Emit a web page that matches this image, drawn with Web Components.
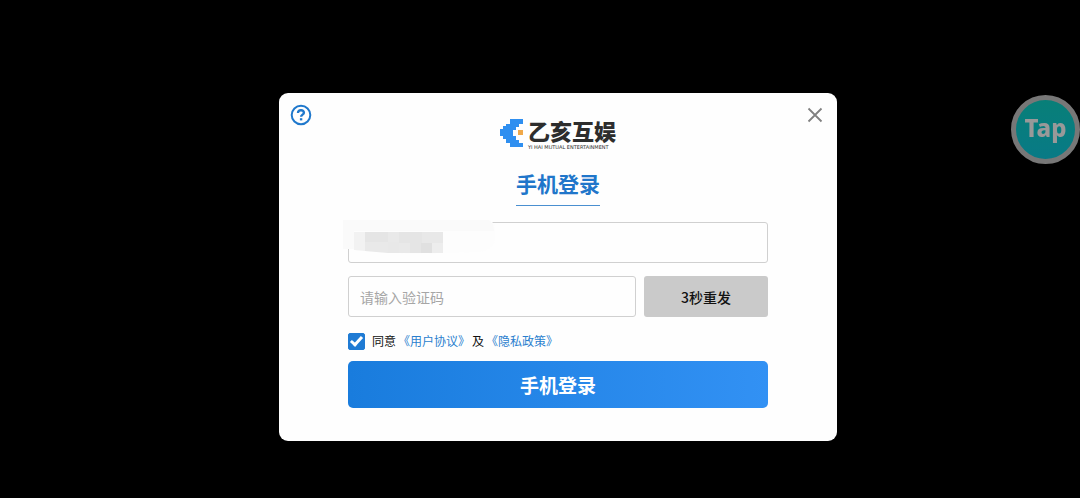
<!DOCTYPE html>
<html lang="zh-CN">
<head>
<meta charset="utf-8">
<meta name="viewport" content="width=device-width, initial-scale=1">
<title>手机登录</title>
<style>
  body {
    margin: 0;
    background: #000;
    color: #111;
    font-family: "Noto Sans CJK SC", "Noto Sans", sans-serif;
  }
</style>
</head>
<body>
<login-screen>
  <login-card heading="手机登录">
    <brand-logo slot="brand" name="乙亥互娱" tagline="YI HAI MUTUAL ENTERTAINMENT"></brand-logo>
    <text-field label="手机号" type="tel"><masked-value></masked-value></text-field>
    <code-row>
      <text-field label="验证码" type="text" placeholder="请输入验证码"></text-field>
      <action-button slot="action" variant="muted">3秒重发</action-button>
    </code-row>
    <consent-check>同意<policy-link>《用户协议》</policy-link>及<policy-link>《隐私政策》</policy-link></consent-check>
    <action-button variant="primary">手机登录</action-button>
  </login-card>
  <float-badge slot="badge">Tap</float-badge>
</login-screen>

<script>
// Full window, the card sits centred inside the safe area
class LoginScreen extends HTMLElement {
  constructor() {
    super();
    this.attachShadow({ mode: 'open' });
    this.shadowRoot.innerHTML = `
      <style>
        :host {
          display: flex;
          box-sizing: border-box;
          min-height: 100vh;
          padding: 36px 0 0 36px;
          align-items: center;
          justify-content: center;
        }
        ::slotted([slot="badge"]) {
          position: fixed;
          top: 95px;
          right: 0;
        }
      </style>
      <slot></slot>
      <slot name="badge"></slot>
    `;
  }
}

class LoginCard extends HTMLElement {
  connectedCallback() {
    this.attachShadow({ mode: 'open' });
    this.shadowRoot.innerHTML = `
      <style>
        :host {
          display: block;
          box-sizing: border-box;
          width: 100%;
          max-width: 558px;
          background: #fefefe;
          border-radius: 9px;
        }
        header {
          display: grid;
          grid-template-columns: 1fr auto 1fr;
          align-items: start;
          padding: 11px 11px 0;
        }
        button {
          display: block;
          width: 22px;
          height: 22px;
          padding: 0;
          border: 0;
          background: none;
          cursor: pointer;
        }
        button svg { display: block; }
        .close { justify-self: end; }
        .brand { padding-top: 13px; }
        main {
          display: flex;
          flex-direction: column;
          padding: 0 69px 33px;
        }
        h1 {
          align-self: center;
          margin: 17px 0 16px;
          padding-bottom: 6px;
          border-bottom: 1px solid #4a8fd0;
          color: #2076ca;
          font-size: 21px;
          line-height: 32px;
          font-weight: 700;
        }
        .fields {
          display: flex;
          flex-direction: column;
          gap: 13px;
        }
      </style>
      <header>
        <button type="button" aria-label="帮助">
          <svg width="22" height="22" viewBox="0 0 22 22" fill="none" stroke="#1f78cc" stroke-width="2">
            <circle cx="11" cy="11" r="9.3"/>
            <path stroke-width="2.4" d="M8 9.1c0-1.8 1.2-2.9 3-2.9s2.9 1 2.9 2.5c0 2-2.8 1.9-2.8 4.1"/>
            <path stroke-width="2.4" d="M11.1 14.2v2.2"/>
          </svg>
        </button>
        <div class="brand"><slot name="brand"></slot></div>
        <button type="button" class="close" aria-label="关闭">
          <svg width="22" height="22" viewBox="0 0 22 22" stroke="#808080" stroke-width="1.8">
            <path d="M4.5 4.5l13 13M17.5 4.5l-13 13"/>
          </svg>
        </button>
      </header>
      <main>
        <h1>${this.getAttribute('heading')}</h1>
        <div class="fields"><slot></slot></div>
      </main>
    `;
  }
}

class BrandLogo extends HTMLElement {
  connectedCallback() {
    this.attachShadow({ mode: 'open' });
    this.shadowRoot.innerHTML = `
      <style>
        :host {
          display: flex;
          align-items: flex-start;
          gap: 4px;
          color: #2d2d2d;
        }
        svg { display: block; }
        .name {
          font-size: 22px;
          line-height: 27px;
          font-weight: 900;
        }
        .tagline {
          font: 5px/6px "DejaVu Sans", sans-serif;
          white-space: nowrap;
        }
      </style>
      <svg width="24" height="32" viewBox="0 0 24 32">
        <path fill="#2f8ff0" d="M10 2h13v5h-4v3h-3v3h-3v6h3v4h3v3h4v4H10v-4H6v-4H3v-3H0v-7h3v-3h3V7h4z"/>
        <path fill="#f0a848" d="M18 13h5v5h-5z"/>
      </svg>
      <div>
        <div class="name">${this.getAttribute('name')}</div>
        <div class="tagline">${this.getAttribute('tagline')}</div>
      </div>
    `;
  }
}

class TextField extends HTMLElement {
  connectedCallback() {
    this.attachShadow({ mode: 'open' });
    this.shadowRoot.innerHTML = `
      <style>
        :host {
          display: block;
          position: relative;
        }
        input {
          display: block;
          box-sizing: border-box;
          width: 100%;
          height: 41px;
          padding: 0 11px;
          border: 1px solid #d0d0d0;
          border-radius: 3px;
          outline: none;
          background: #fefefe;
          color: #222;
          font-family: inherit;
          font-size: 14px;
        }
        input::placeholder { color: #a6a6a6; opacity: 1; }
      </style>
      <input type="${this.getAttribute('type')}"
        aria-label="${this.getAttribute('label')}"
        placeholder="${this.getAttribute('placeholder') || ''}">
      <slot></slot>
    `;
  }
}

// Smudge and mosaic painted over the number
class MaskedValue extends HTMLElement {
  constructor() {
    super();
    this.attachShadow({ mode: 'open' });
    this.shadowRoot.innerHTML = `
      <style>
        :host {
          display: block;
          position: absolute;
          top: -2px;
          left: -5px;
          pointer-events: none;
        }
        svg { display: block; }
      </style>
      <svg width="154" height="36" viewBox="0 0 154 36">
        <path fill="#fdfdfd" d="M0 0h146q6 2 6 10v10q-2 10-16 12l-30 1-40 1-60-5H0z"/>
        <path fill="#fafafa" d="M0 0h145q6 2 6 11H0zM0 11h11v18H0z"/>
        <path fill="#f2f2f2" d="M11 12h11v19l-11-1z"/>
        <path fill="#e5e5e5" d="M22 12h23v10H22zM56 12h23v11H56zM67 23h22v10H67z"/>
        <path fill="#e9e9e9" d="M45 12h11v10H45zM22 22h23v11l-23-2zM56 23h11v10H56z"/>
        <path fill="#e8e8e8" d="M79 12h21v11H79zM45 22h11v11H45z"/>
        <path fill="#e0e0e0" d="M78 23h11v10H78z"/>
        <path fill="#ededed" d="M89 23h11v10H89z"/>
      </svg>
    `;
  }
}

class CodeRow extends HTMLElement {
  constructor() {
    super();
    this.attachShadow({ mode: 'open' });
    this.shadowRoot.innerHTML = `
      <style>
        :host {
          display: grid;
          grid-template-columns: 1fr 124px;
          gap: 8px;
        }
      </style>
      <slot></slot>
      <slot name="action"></slot>
    `;
  }
}

class ActionButton extends HTMLElement {
  constructor() {
    super();
    this.attachShadow({ mode: 'open' });
    this.shadowRoot.innerHTML = `
      <style>
        :host { display: block; }
        button {
          display: block;
          width: 100%;
          height: 41px;
          padding: 0;
          border: 0;
          border-radius: 3px;
          font-family: inherit;
          cursor: pointer;
        }
        :host([variant="muted"]) button {
          background: #cacaca;
          color: #111;
          font-size: 14px;
          font-weight: 500;
        }
        :host([variant="primary"]) button {
          height: 47px;
          border-radius: 5px;
          background: linear-gradient(90deg, #197cdd, #3291f4);
          color: #fff;
          font-size: 19px;
          font-weight: 700;
        }
      </style>
      <button type="button"><slot></slot></button>
    `;
  }
}

class ConsentCheck extends HTMLElement {
  constructor() {
    super();
    this.attachShadow({ mode: 'open' });
    this.shadowRoot.innerHTML = `
      <style>
        :host {
          display: flex;
          align-items: center;
          gap: 7px;
          height: 18px;
          margin: 2px 0 -2px;
          font-size: 12px;
          line-height: 18px;
        }
        input {
          appearance: none;
          display: grid;
          place-items: center;
          width: 17px;
          height: 17px;
          margin: 0;
          border: 1px solid #1f7bd4;
          border-radius: 2px;
          background: #fff;
        }
        input:checked { background: #1f7bd4; }
        input:checked::after {
          content: "";
          box-sizing: border-box;
          width: 7px;
          height: 12px;
          margin-bottom: 3px;
          border: solid #fff;
          border-width: 0 3px 3px 0;
          transform: rotate(42deg);
        }
      </style>
      <input type="checkbox" id="agree" checked>
      <label for="agree"><slot></slot></label>
    `;
  }
}

class PolicyLink extends HTMLElement {
  constructor() {
    super();
    this.attachShadow({ mode: 'open' });
    this.shadowRoot.innerHTML = `
      <style>
        :host { display: inline-flex; margin: 0 2px; }
        a { color: #2a7fce; text-decoration: none; }
      </style>
      <a href="#"><slot></slot></a>
    `;
  }
}

class FloatBadge extends HTMLElement {
  constructor() {
    super();
    this.attachShadow({ mode: 'open' });
    this.shadowRoot.innerHTML = `
      <style>
        button {
          display: block;
          box-sizing: border-box;
          width: 69px;
          height: 69px;
          padding: 0 0 3px;
          border: 5px solid #777;
          border-radius: 50%;
          background: linear-gradient(#087f78, #087a86);
          color: #999;
          font: 800 24px/30px "Noto Sans", sans-serif;
          cursor: pointer;
        }
      </style>
      <button type="button"><slot></slot></button>
    `;
  }
}

customElements.define('login-screen', LoginScreen);
customElements.define('login-card', LoginCard);
customElements.define('brand-logo', BrandLogo);
customElements.define('text-field', TextField);
customElements.define('masked-value', MaskedValue);
customElements.define('code-row', CodeRow);
customElements.define('action-button', ActionButton);
customElements.define('consent-check', ConsentCheck);
customElements.define('policy-link', PolicyLink);
customElements.define('float-badge', FloatBadge);
</script>
</body>
</html>
